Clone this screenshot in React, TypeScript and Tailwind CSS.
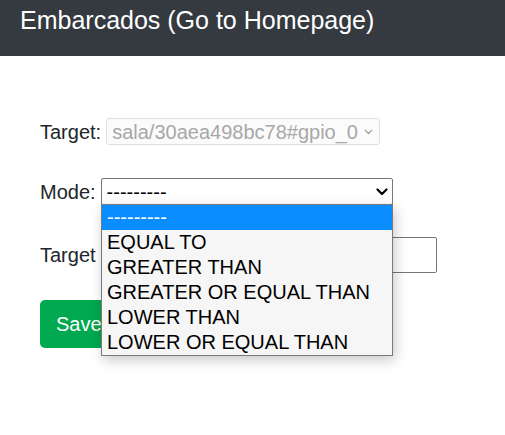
import React from 'react';

const modes = [
  '---------',
  'EQUAL TO',
  'GREATER THAN',
  'GREATER OR EQUAL THAN',
  'LOWER THAN',
  'LOWER OR EQUAL THAN',
];

function Chevron({ className }: { className: string }) {
  return (
    <svg viewBox="0 0 12 8" className={className} fill="none" stroke="currentColor" strokeLinecap="round" strokeLinejoin="round">
      <polyline points="1.5,1.5 6,6 10.5,1.5" />
    </svg>
  );
}

export default function App() {
  return (
    <div className="min-h-screen bg-white text-[20px] text-[#212529] font-['Liberation_Sans',Arial,sans-serif]">
      {/* Navbar */}
      <header className="h-[56px] bg-[#343a40] px-[20px] pt-[5px]">
        <a href="#" className="text-[25px] leading-[30px] text-white">
          Embarcados (Go to Homepage)
        </a>
      </header>

      {/* Form */}
      <main className="relative px-[40px] pt-[62px]">
        <div className="flex items-center h-[27px]">
          <label>Target:</label>
          <div className="ml-[5px] flex items-center justify-between w-[274px] h-[27px] border border-[#dedede] rounded-[3px] bg-[#fbfbfb] pl-[5px] pr-[6px] text-[#a8a8a8]">
            <span className="leading-none">sala/30aea498bc78#gpio_0</span>
            <Chevron className="w-[9px] h-[6px] stroke-[1.6] text-[#9a9a9a]" />
          </div>
        </div>

        <div className="flex items-center h-[27px] mt-[33px]">
          <label>Mode:</label>
          <div className="ml-[5px] flex items-center justify-between w-[292px] h-[27px] border border-[#767676] rounded-[2px] bg-white pl-[5px] pr-[4px] text-black">
            <span className="leading-none">---------</span>
            <Chevron className="w-[12px] h-[8px] stroke-[2.2]" />
          </div>
        </div>

        <div className="flex items-center h-[36px] mt-[32px]">
          <label className="w-[123px]">Target value:</label>
          <input className="w-[274px] h-[36px] border border-[#767676] rounded-[2px] bg-white px-[5px]" />
        </div>

        <button className="mt-[27px] h-[48px] px-[16px] rounded-[5px] bg-[#00a84f] text-white">
          Save
        </button>

        {/* Open dropdown list */}
        <ul className="absolute left-[101px] top-[148px] w-[292px] border border-[#7a7a7a] bg-[#f6f6f6] shadow-[2px_4px_12px_rgba(0,0,0,0.22)] text-black">
          {modes.map((m, i) => (
            <li
              key={m}
              className={`h-[25px] leading-[25px] pl-[5px] ${i === 0 ? 'bg-[#0a8dff] text-white' : ''}`}
            >
              {m}
            </li>
          ))}
        </ul>
      </main>
    </div>
  );
}
